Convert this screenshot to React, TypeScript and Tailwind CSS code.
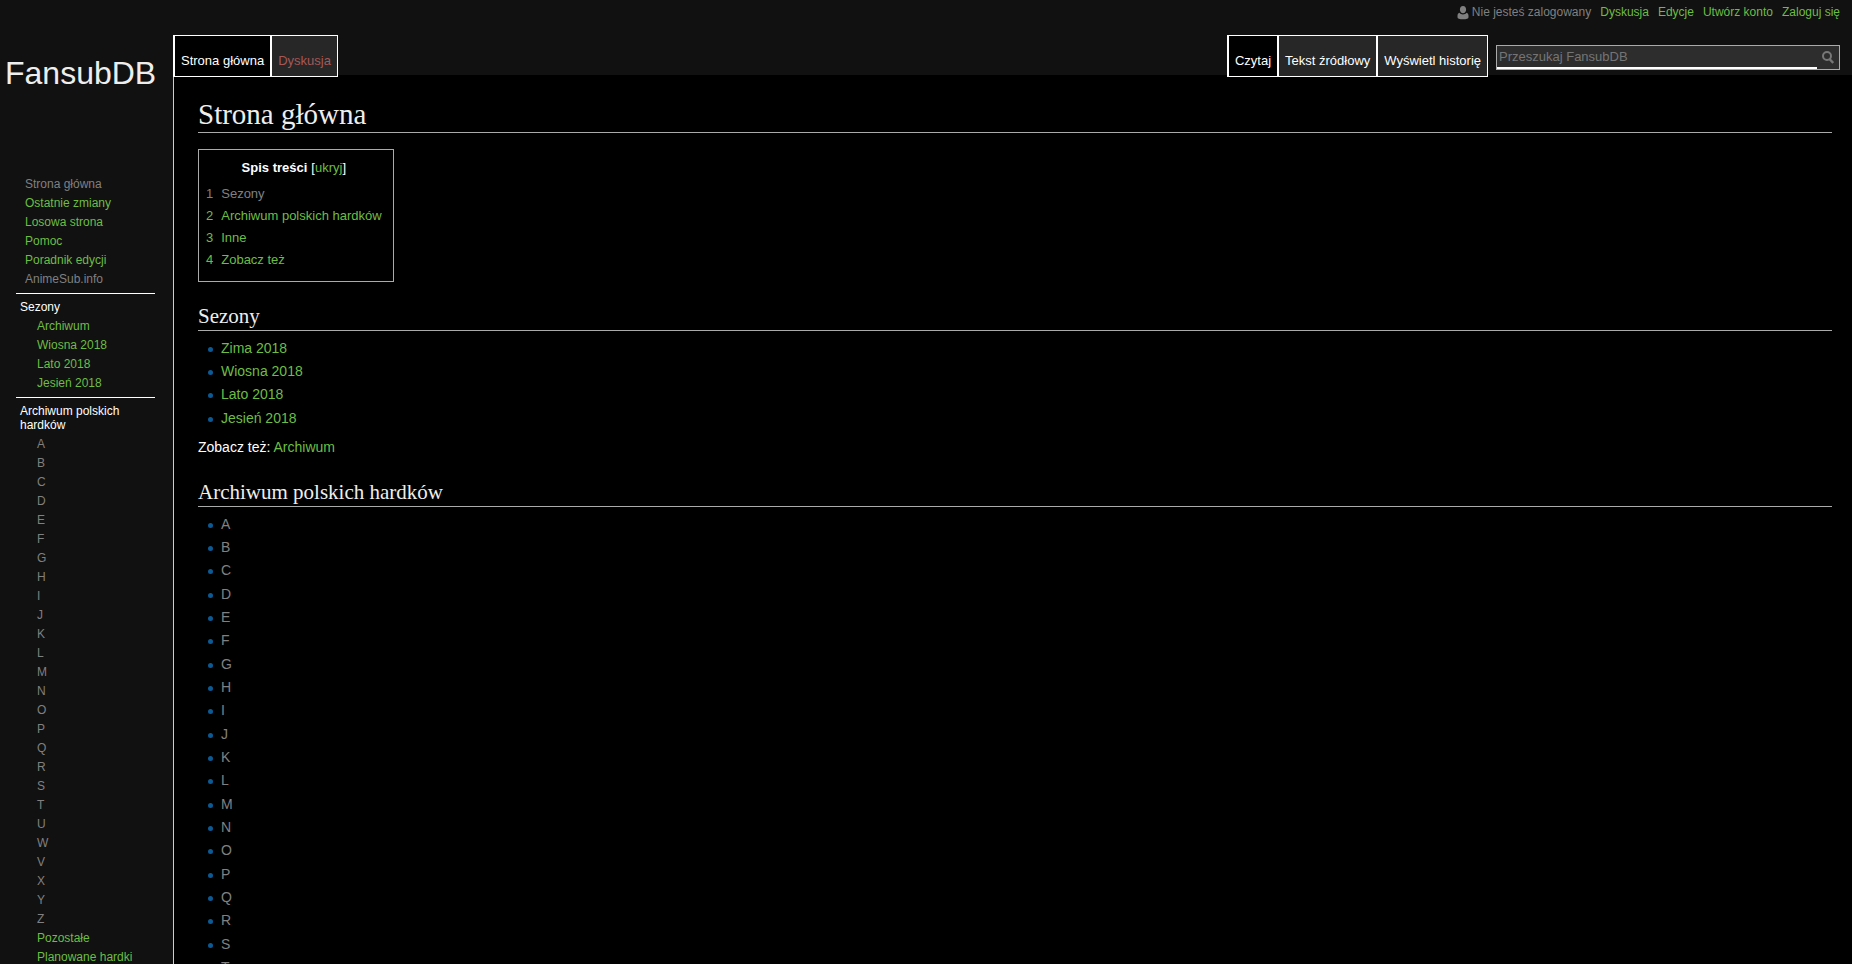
import React from 'react';

const GREEN = 'text-[#6dbd45]';
const MUTED = 'text-[#808080]';

type Item = { label: string; muted?: boolean };

const siteLinks: Item[] = [
  { label: 'Strona główna', muted: true },
  { label: 'Ostatnie zmiany' },
  { label: 'Losowa strona' },
  { label: 'Pomoc' },
  { label: 'Poradnik edycji' },
  { label: 'AnimeSub.info', muted: true },
];

const seasonLinks: Item[] = ['Archiwum', 'Wiosna 2018', 'Lato 2018', 'Jesień 2018'].map((label) => ({ label }));

const archiveLinks: Item[] = [
  ...'ABCDEFGHIJKLMNOPQRSTUWVXYZ'.split('').map((label) => ({ label, muted: true })),
  { label: 'Pozostałe' },
  { label: 'Planowane hardki' },
];

const contents: Item[] = [
  { label: 'Sezony', muted: true },
  { label: 'Archiwum polskich hardków' },
  { label: 'Inne' },
  { label: 'Zobacz też' },
];

const seasons: Item[] = ['Zima 2018', 'Wiosna 2018', 'Lato 2018', 'Jesień 2018'].map((label) => ({ label }));
const letters: Item[] = 'ABCDEFGHIJKLMNOPQRST'.split('').map((label) => ({ label, muted: true }));

function Link({ label, muted }: Item) {
  return (
    <a href="#" className={`hover:underline ${muted ? MUTED : GREEN}`}>
      {label}
    </a>
  );
}

function SideList({ items }: { items: Item[] }) {
  return (
    <ul className="text-xs leading-[19px]">
      {items.map((item) => (
        <li key={item.label}>
          <Link {...item} />
        </li>
      ))}
    </ul>
  );
}

function BulletList({ items }: { items: Item[] }) {
  return (
    <ul className="pt-1.5 pl-[10px] text-sm leading-[23px]">
      {items.map((item) => (
        <li key={item.label} className="flex items-center gap-2 nth-[3n]:pb-px">
          <span className="mt-0.5 size-[5px] rounded-full bg-[#0b5a94]" />
          <Link {...item} />
        </li>
      ))}
    </ul>
  );
}

function Tab({ label, active, missing }: { label: string; active?: boolean; missing?: boolean }) {
  return (
    <li className="flex">
      <a
        href="#"
        className={`flex h-[42px] items-end border border-white px-1.5 pb-[7px] text-[13px] leading-4 whitespace-nowrap ${
          active ? 'bg-black' : 'bg-[#272727]'
        } ${missing ? 'text-[#a55858]' : 'text-white'}`}
      >
        {label}
      </a>
    </li>
  );
}

function SectionHeading({ children }: { children: string }) {
  return (
    <h2 className="border-b border-[#aaa] font-['Liberation_Serif',serif] text-[21px] leading-7 text-[#eee]">
      {children}
    </h2>
  );
}

export default function App() {
  return (
    <div className="flex min-h-screen bg-[#111] font-['Liberation_Sans',Arial,sans-serif] text-white">
      <aside className="w-[173px] shrink-0">
        <a href="#" className="block pt-[55px] pl-[5px] text-[32px] leading-[36px] text-[#eee]">
          FansubDB
        </a>
        <nav aria-label="Nawigacja" className="px-4 pt-[84px]">
          <div className="pb-1 pl-[9px]">
            <SideList items={siteLinks} />
          </div>
          <section className="w-[139px] border-t border-white pt-1.5 pb-1">
            <h3 className="pl-1 text-xs leading-[14px]">Sezony</h3>
            <div className="pt-[3px] pl-[21px]">
              <SideList items={seasonLinks} />
            </div>
          </section>
          <section className="w-[139px] border-t border-white pt-1.5">
            <h3 className="pl-1 text-xs leading-[14px]">Archiwum polskich hardków</h3>
            <div className="pt-[3px] pl-[21px]">
              <SideList items={archiveLinks} />
            </div>
          </section>
        </nav>
      </aside>

      <div className="flex min-w-0 grow flex-col">
        <header className="relative z-10 h-[75px] pr-3">
          <ul className="flex h-[35px] justify-end gap-[9px] pt-1 text-xs leading-4">
            <li className={`flex gap-[3px] ${MUTED}`}>
              <svg viewBox="0 0 12 14" className="mt-0.5 h-[14px] w-3" fill="currentColor" aria-hidden="true">
                <path d="M6 0C3.900 0 2.900 1.600 2.900 3.600S4 7.300 6 7.300s3.100-1.700 3.100-3.700S8.100 0 6 0zM2.400 6.800C1.200 7.200.5 8.200.5 9.800v1.400C.5 12.600 2.500 13.300 6 13.300s5.500-.7 5.500-2.100V9.800c0-1.600-.7-2.600-1.900-3C8.700 7.900 7.400 8.400 6 8.400S3.300 7.900 2.400 6.800z" />
              </svg>
              Nie jesteś zalogowany
            </li>
            {['Dyskusja', 'Edycje', 'Utwórz konto', 'Zaloguj się'].map((label) => (
              <li key={label}>
                <Link label={label} />
              </li>
            ))}
          </ul>
          <div className="flex items-start">
            <ul className="flex border-l border-white">
              <Tab label="Strona główna" active />
              <Tab label="Dyskusja" missing />
            </ul>
            <ul className="ml-auto flex border-l border-white">
              <Tab label="Czytaj" active />
              <Tab label="Tekst źródłowy" />
              <Tab label="Wyświetl historię" />
            </ul>
            <form
              role="search"
              className="mt-[10px] ml-2 flex h-[25px] w-[344px] border border-[#aaa] bg-[#2d2d2d]"
              onSubmit={(e) => e.preventDefault()}
            >
              <input
                type="search"
                aria-label="Przeszukaj FansubDB"
                placeholder="Przeszukaj FansubDB"
                className="min-w-0 grow border-b-2 border-white px-0.5 text-[13px] outline-none placeholder:text-[#757575]"
              />
              <button type="submit" aria-label="Szukaj" className="flex w-[22px] items-center justify-center text-[#777]">
                <svg viewBox="0 0 12 13" className="h-[13px] w-3" fill="none" stroke="currentColor" strokeWidth="2" aria-hidden="true">
                  <circle cx="5" cy="5" r="4" />
                  <path d="M7.700 8.200 11.200 12" strokeWidth="2.400" />
                </svg>
              </button>
            </form>
          </div>
        </header>

        <main className="grow border-l border-[#a7d7f9] bg-black pt-[21px] pr-5 pl-6">
          <h1 className="border-b border-[#aaa] font-['Liberation_Serif',serif] text-[29px] leading-9 text-[#eee]">
            Strona główna
          </h1>

          <nav aria-label="Spis treści" className="mt-4 w-fit border border-[#aaa] pt-2 pr-[11px] pb-[9px] pl-[7px] text-[13px]">
            <div className="flex justify-center gap-1 leading-5">
              <h2 className="font-bold">Spis treści</h2>
              <span>
                [
                <button type="button" className={`cursor-pointer ${GREEN}`}>
                  ukryj
                </button>
                ]
              </span>
            </div>
            <ol className="pt-[5px] pb-px leading-[22px]">
              {contents.map((item, i) => (
                <li key={item.label}>
                  <a href="#" className={`flex gap-2 ${item.muted ? MUTED : GREEN}`}>
                    <span>{i + 1}</span>
                    <span>{item.label}</span>
                  </a>
                </li>
              ))}
            </ol>
          </nav>

          <section className="pt-5">
            <SectionHeading>Sezony</SectionHeading>
            <BulletList items={seasons} />
            <p className="pt-1.5 text-sm leading-[22px]">
              Zobacz też: <Link label="Archiwum" />
            </p>
          </section>

          <section className="pt-5">
            <SectionHeading>Archiwum polskich hardków</SectionHeading>
            <BulletList items={letters} />
          </section>
        </main>
      </div>
    </div>
  );
}
